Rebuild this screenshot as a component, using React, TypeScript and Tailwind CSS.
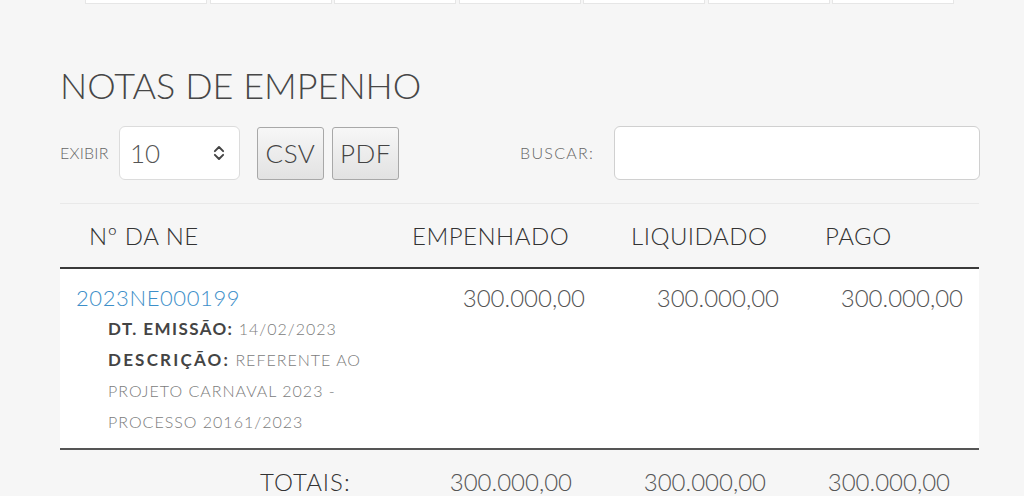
import React from "react";

const font = { fontFamily: "Lato, 'Open Sans', sans-serif" };

function UpDown() {
  return (
    <svg className="w-[18px] h-[18px] text-[#444]" fill="none" stroke="currentColor" viewBox="0 0 24 24">
      <path strokeLinecap="round" strokeLinejoin="round" strokeWidth={2.6} d="M6.5 9.5l5.5-5.5 5.5 5.5M6.5 14.5l5.5 5.5 5.5-5.5" />
    </svg>
  );
}

export default function App() {
  const cols = ["", "", "", "", "", "", ""];
  return (
    <div className="w-[1024px] h-[496px] overflow-hidden bg-[#f6f6f6] font-light text-[#444]" style={font}>
      {/* top strip of cells cut off by the viewport */}
      <div className="flex gap-[2.5px] pl-[85px] h-[4px]">
        {cols.map((_, i) => (
          <div key={i} className="w-[122px] h-[4px] bg-white border-x border-b border-[#e6e6e6]" />
        ))}
      </div>

      <div className="pl-[60px]">
        <h1 className="mt-[59px] text-[36px] leading-[44px] text-[#474747] font-light">
          NOTAS DE EMPENHO
        </h1>

        {/* controls */}
        <div className="mt-[19px] flex items-center h-[54px]">
          <span className="w-[53px] text-[16px] tracking-[0.2px] text-[#666]">EXIBIR</span>
          <div className="ml-[6px] w-[121px] h-[54px] bg-white border border-[#dcdcdc] rounded-[6px] flex items-center justify-between pl-[10px] pr-[11px]">
            <span className="text-[26px] text-[#555]">10</span>
            <UpDown />
          </div>
          <button className="ml-[17px] w-[67px] h-[53px] rounded-[3px] border border-[#a8a8a8] bg-gradient-to-b from-[#f7f7f7] to-[#e2e2e2] text-[26px] tracking-[0.5px] text-[#444]">
            CSV
          </button>
          <button className="ml-[8px] w-[67px] h-[53px] rounded-[3px] border border-[#a8a8a8] bg-gradient-to-b from-[#f7f7f7] to-[#e2e2e2] text-[26px] tracking-[0.5px] text-[#444]">
            PDF
          </button>
          <span className="ml-[121px] w-[75px] text-[16px] tracking-[1.3px] text-[#666]">BUSCAR:</span>
          <input className="ml-[19px] w-[366px] h-[54px] bg-white border border-[#d0d0d0] rounded-[6px] outline-none" />
        </div>

        <div className="mt-[23px] w-[919px] border-t border-[#e9e9e9]" />

        {/* table */}
        <div className="w-[919px]">
          <div className="grid grid-cols-[336px_219px_180px_184px] h-[65px] items-center text-[24px] tracking-[0.5px] text-[#333] border-b-2 border-[#3a3a3a]">
            <div className="pl-[29px]">Nº DA NE</div>
            <div className="pl-[16px]">EMPENHADO</div>
            <div className="pl-[16px]">LIQUIDADO</div>
            <div className="pl-[30px]">PAGO</div>
          </div>

          <div className="grid grid-cols-[336px_219px_180px_184px] bg-white border-b-2 border-[#555] pt-[14px] pb-[11px]">
            <div className="pl-[16px]">
              <div className="text-[22px] leading-[30px] tracking-[0.6px] text-[#3d8fc9]">2023NE000199</div>
              <div className="pl-[32px] text-[16px] leading-[31px] tracking-[1px] text-[#7c7c7c]">
                <div>
                  <span className="font-bold text-[17px] tracking-[1.4px] text-[#444]">DT. EMISSÃO:</span> 14/02/2023
                </div>
                <div>
                  <span className="font-bold text-[17px] tracking-[2.2px] text-[#444]">DESCRIÇÃO:</span> REFERENTE AO
                  <br />
                  PROJETO CARNAVAL 2023 -
                  <br />
                  PROCESSO 20161/2023
                </div>
              </div>
            </div>
            <div className="text-right pr-[30px] text-[24px] leading-[30px] text-[#555]">300.000,00</div>
            <div className="text-right pr-[16px] text-[24px] leading-[30px] text-[#555]">300.000,00</div>
            <div className="text-right pr-[16px] text-[24px] leading-[30px] text-[#555]">300.000,00</div>
          </div>

          <div className="grid grid-cols-[336px_219px_180px_184px] h-[64px] items-center text-[24px] text-[#555]">
            <div className="pl-[200px] tracking-[1px] text-[#333]">TOTAIS:</div>
            <div className="text-right pr-[43px]">300.000,00</div>
            <div className="text-right pr-[29px]">300.000,00</div>
            <div className="text-right pr-[29px]">300.000,00</div>
          </div>
        </div>
      </div>
    </div>
  );
}
